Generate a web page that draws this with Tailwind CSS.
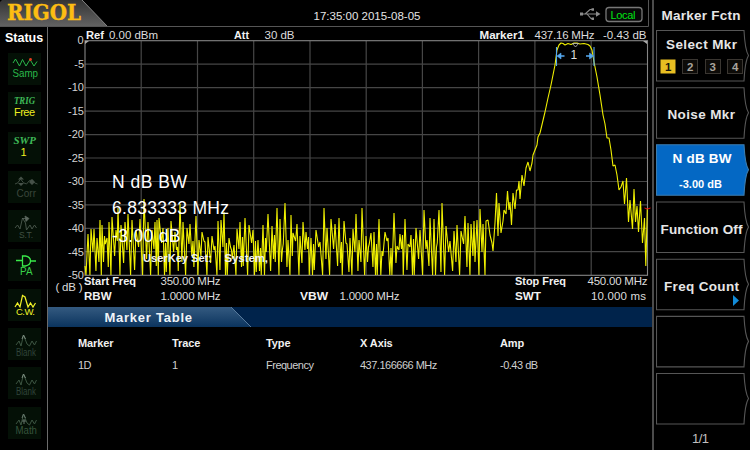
<!DOCTYPE html>
<html lang="en">
<head>
<meta charset="utf-8">
<title>Spectrum Analyzer</title>
<script src="https://cdn.jsdelivr.net/npm/@tailwindcss/browser@4"></script>
</head>
<body class="bg-black overflow-hidden">
<div class="flex w-[750px] h-[450px] bg-black text-[#e4e4e4] font-['Liberation_Sans',Arial,sans-serif]">
  <div class="flex flex-col w-[652px] shrink-0">
    <!-- Top bar -->
    <header class="w-[652px] h-[27px] shrink-0">
      <svg width="652" height="27" viewBox="0 0 652 27" class="block">
        <defs><linearGradient id="logo" x1="0" y1="0" x2="0" y2="1"><stop offset="0" stop-color="#343434"/><stop offset="1" stop-color="#626262"/></linearGradient></defs>
        <path d="M0 2L2 0H82L107 26H0Z" fill="url(#logo)"/>
        <path d="M82 0L107 26" stroke="#858585" fill="none"/>
        <path d="M0 26.500H648.500V0" stroke="#555" fill="none"/>
        <text x="7" y="20" font-family="'DejaVu Serif',serif" font-weight="bold" font-size="21.500" fill="#fdbd12" stroke="#fdbd12" stroke-width=".4" textLength="74" lengthAdjust="spacingAndGlyphs">RIGOL</text>
        <text x="313.500" y="20" font-size="11.500" fill="#e4e4e4" textLength="107">17:35:00 2015-08-05</text>
        <g stroke="#8b8b8b" fill="none" stroke-width="1.100"><path d="M581 14H597M585 14L590 9.500H592M587 14L591 18.500H593"/></g>
        <path d="M596 11.300L600.500 14L596 16.700ZM580 12.500h3v3h-3ZM591.500 8.200h2.500v2.500H591.500ZM591.500 17.500h2.500V20H591.500Z" fill="#8b8b8b"/>
        <rect x="606" y="7.500" width="36" height="14" rx="3" fill="#080808" stroke="#777" stroke-width="1.300"/>
        <text x="610.500" y="19" font-size="11" fill="#00e414" textLength="25">Local</text>
      </svg>
    </header>
    <div class="flex flex-1">
      <!-- Status column -->
      <aside class="w-[48px] shrink-0 border-r border-[#6b6b6b] flex flex-col">
        <h2 class="h-[26px] pt-[3px] pl-[5px] text-[12.5px] leading-[16px] font-bold text-white">Status</h2>
        <div class="flex flex-col gap-[7.300px] pl-[8px]">
          <svg width="33" height="32" viewBox="0 0 33 32" class="bg-[#041006]"><path d="M5 10L7.500 6L11.500 13L14.500 6.500L18 13L22 6.500L26 13L29 8.500" fill="none" stroke="#2ab74a"/><circle cx="22.500" cy="6.500" r="1.400" fill="#e43b20"/><text x="4.500" y="24" font-size="11" fill="#2ab74a" textLength="25.500" lengthAdjust="spacingAndGlyphs">Samp</text></svg>
          <svg width="33" height="32" viewBox="0 0 33 32" class="bg-[#041006]"><text x="6" y="12" font-family="'Liberation Serif',serif" font-size="9.500" font-weight="bold" font-style="italic" fill="#3fb958" textLength="21" lengthAdjust="spacingAndGlyphs">TRIG</text><text x="6" y="24" font-size="11" fill="#eeee20" textLength="21">Free</text></svg>
          <svg width="33" height="32" viewBox="0 0 33 32" class="bg-[#041006]"><text x="5.500" y="12" font-family="'Liberation Serif',serif" font-size="10.500" font-weight="bold" font-style="italic" fill="#3fb958" textLength="22.500" lengthAdjust="spacingAndGlyphs">SWP</text><text x="12.500" y="24" font-size="11" fill="#eeee20">1</text></svg>
          <svg width="33" height="32" viewBox="0 0 33 32" class="bg-[#041006]"><path d="M7 13q3 0 5.500-5q3 5 6 5q3-5 6-4q2 4 5 4" fill="none" stroke="#3f4c41"/><path d="M10 8.500l3-3 3 3ZM10 12l3 3 3-3M21 11l3-3 3 3-3 3Z" fill="#465148"/><text x="8.500" y="26" font-size="11" fill="#3a463c" textLength="19.500" lengthAdjust="spacingAndGlyphs">Corr</text></svg>
          <svg width="33" height="32" viewBox="0 0 33 32" class="bg-[#041006]"><path d="M7 18L9.500 15L12 19L14.500 8L17.500 13L18.500 20L22 15L24 19L26.500 15L28.500 18" fill="none" stroke="#465348"/><path d="M14 8.500h4M17 6l4 2.500-3 3Z" stroke="#5c675e" fill="#5c675e" stroke-width=".8"/><text x="11" y="27.500" font-size="8.500" fill="#415044" textLength="14">S.T.</text></svg>
          <svg width="33" height="32" viewBox="0 0 33 32" class="bg-[#041006]"><path d="M8 11.500h6M22 12h6M14.500 7h3q5 1 5 5t-5 5h-3Z" fill="none" stroke="#39e94a" stroke-width="1.300"/><text x="12" y="26" font-size="10.500" fill="#39d249" textLength="12.500" lengthAdjust="spacingAndGlyphs">PA</text></svg>
          <svg width="33" height="32" viewBox="0 0 33 32" class="bg-[#041006]"><path d="M7 18L9.500 14L12 18L14.500 6.500L17 8L20 18L22.500 14L25 18L27.500 14" fill="none" stroke="#f2f228" stroke-width="1.200"/><text x="8" y="25.500" font-size="9.500" fill="#f2f228" textLength="19">C.W.</text></svg>
          <svg width="33" height="32" viewBox="0 0 33 32" class="bg-[#041006]"><path d="M8 17L11 13L13 18L15.500 7L19 16L21.500 18L24 13L26.500 17L28.500 13" fill="none" stroke="#3d5542"/><path d="M14 11l1.500-4 2 4" stroke="#7c8c7f" fill="none"/><text x="8" y="27.500" font-size="10" fill="#30443a" textLength="20" lengthAdjust="spacingAndGlyphs">Blank</text></svg>
          <svg width="33" height="32" viewBox="0 0 33 32" class="bg-[#041006]"><path d="M8 17L11 13L13 18L15.500 7L19 16L21.500 18L24 13L26.500 17L28.500 13" fill="none" stroke="#3d5542"/><path d="M14 11l1.500-4 2 4" stroke="#7c8c7f" fill="none"/><text x="8" y="27.500" font-size="10" fill="#30443a" textLength="20" lengthAdjust="spacingAndGlyphs">Blank</text></svg>
          <svg width="33" height="32" viewBox="0 0 33 32" class="bg-[#041006]"><path d="M8 17L11 13L13 18L15.500 7L19 16L21.500 18L24 13L26.500 17L28.500 13" fill="none" stroke="#3d5542"/><path d="M14 11l1.500-4 2 4M14 14h4M16 12v5" stroke="#64756a" fill="none"/><text x="7.500" y="26.500" font-size="10" fill="#36533c" textLength="21.500" lengthAdjust="spacingAndGlyphs">Math</text></svg>
        </div>
      </aside>
      <main class="w-[604px] flex flex-col">
        <!-- Spectrum chart -->
        <svg width="604" height="280" viewBox="48 27 604 280" class="block shrink-0">
          <g stroke="#464646" stroke-width="1.200" fill="none">
            <path d="M141.200 41V275M197.500 41V275M253.700 41V275M310 41V275M366.200 41V275M422.400 41V275M478.600 41V275M534.900 41V275M591.200 41V275"/>
            <path d="M85 64.200H648M85 87.600H648M85 111.200H648M85 134.600H648M85 158H648M85 181.500H648M85 204.800H648M85 228.300H648M85 251.600H648"/>
          </g>
          <rect x="85" y="40.700" width="562.500" height="234.600" fill="none" stroke="#858585" stroke-width="1.100"/>
          <path d="M85 41h4l-4 3ZM643 41h4v3Z" fill="#aaa"/>
          <g font-size="11" fill="#d4d4d4" text-anchor="end">
            <text x="83.500" y="44.300">0</text><text x="84" y="67.800">-5</text><text x="84" y="91.300">-10</text><text x="84" y="114.800">-15</text><text x="84" y="138.300">-20</text><text x="84" y="161.800">-25</text><text x="84" y="185.300">-30</text><text x="84" y="208.800">-35</text><text x="84" y="232.300">-40</text><text x="84" y="255.800">-45</text><text x="84" y="279.300">-50</text>
          </g>
          <path id="trace" fill="none" stroke="#f0f000" stroke-width="1.100" stroke-linejoin="bevel"/>
          <g stroke="#56a9f0" fill="#56a9f0">
            <path d="M556.500 47V66M594 47V66" stroke-width="1.100"/>
            <path d="M560 56H564.500M586 56H590" stroke-width="1.500"/>
            <path d="M557 56l4-3v6ZM593.500 56l-4-3v6Z" stroke-width=".6"/>
          </g>
          <path d="M572.500 43.500h6l-3 3.500Z" fill="none" stroke="#bdbdbd" stroke-width=".8"/>
          <text x="570.500" y="58.500" font-size="12" fill="#dedede">1</text>
          <path d="M644.500 208q3 2 6 0" stroke="#e41010" fill="none"/>
          <g font-size="11.500" font-weight="bold" fill="#f2f2f2">
            <text x="86" y="39.300" textLength="18" lengthAdjust="spacingAndGlyphs">Ref</text><text x="234" y="39.300" textLength="15" lengthAdjust="spacingAndGlyphs">Att</text><text x="479.500" y="39.300" textLength="44.500" lengthAdjust="spacingAndGlyphs">Marker1</text>
            <text x="84" y="285" textLength="52" lengthAdjust="spacingAndGlyphs">Start Freq</text><text x="515" y="285" textLength="51" lengthAdjust="spacingAndGlyphs">Stop Freq</text>
            <text x="84" y="300" textLength="27.500" lengthAdjust="spacingAndGlyphs">RBW</text><text x="300" y="300" textLength="28" lengthAdjust="spacingAndGlyphs">VBW</text><text x="515" y="300" textLength="26" lengthAdjust="spacingAndGlyphs">SWT</text>
            <text x="143" y="262.300" textLength="69" lengthAdjust="spacingAndGlyphs">UserKey Set:</text><text x="224.500" y="262.300" textLength="43.500" lengthAdjust="spacingAndGlyphs">System,</text>
          </g>
          <g font-size="11.500" fill="#dcdcdc">
            <text x="109" y="39.300" textLength="49">0.00 dBm</text><text x="264.500" y="39.300" textLength="30">30 dB</text><text x="534.500" y="39.300" textLength="60">437.16 MHz</text><text x="603" y="39.300" textLength="43.500">-0.43 dB</text>
            <text x="160.500" y="285" textLength="60">350.00 MHz</text><text x="587.500" y="285" textLength="60">450.00 MHz</text>
            <text x="160.500" y="300" textLength="60">1.0000 MHz</text><text x="339.500" y="300" textLength="60">1.0000 MHz</text><text x="591" y="300" textLength="55">10.000 ms</text>
            <text x="55.500" y="291" textLength="27">( dB )</text>
          </g>
          <g font-size="17.500" fill="#fff">
            <text x="112" y="188" textLength="75">N dB BW</text><text x="112" y="213.700" textLength="117">6.833333 MHz</text><text x="112" y="242" textLength="68.500">-3.00 dB</text>
          </g>
        </svg>
        <!-- Marker table -->
        <section class="w-[604px]">
          <div class="h-[20px] bg-[#00234b]">
            <svg width="204" height="20" viewBox="0 0 204 20" class="block">
              <defs><linearGradient id="tab" x1="0" y1="0" x2="0" y2="1"><stop offset="0" stop-color="#345a80"/><stop offset="1" stop-color="#0b345e"/></linearGradient></defs>
              <path d="M0 0H183L203 20H0Z" fill="url(#tab)"/><path d="M183 0L203 20" stroke="#57799b"/>
              <text x="56.500" y="14.500" font-size="13" font-weight="bold" fill="#f0f4f8" textLength="87.500">Marker Table</text>
            </svg>
          </div>
          <div class="grid grid-cols-[94px_94px_94px_140px_1fr] pl-[30px] pt-[9px] text-[11px] leading-[14px] font-bold text-[#f0f0f0] tracking-[-0.1px]">
            <span>Marker</span><span>Trace</span><span>Type</span><span>X Axis</span><span>Amp</span>
          </div>
          <div class="grid grid-cols-[94px_94px_94px_140px_1fr] pl-[30px] pt-[8px] text-[11px] leading-[14px] text-[#cfcfcf] tracking-[-0.5px]">
            <span>1D</span><span>1</span><span>Frequency</span><span>437.166666 MHz</span><span>-0.43 dB</span>
          </div>
        </section>
      </main>
    </div>
  </div>
  <!-- Soft-key menu -->
  <nav class="w-[98px] shrink-0 border-l-2 border-[#4b4b4b] pl-[2px]">
    <svg width="94" height="450" viewBox="656 0 94 450" class="block">
      <defs><path id="key" d="M656.500 .5H744Q745 20 748.500 25.500Q745 31 744 51H656.500Z"/></defs>
      <g fill="#000" stroke="#565656" stroke-width="1.100">
        <use href="#key" y="30"/><use href="#key" y="87.200"/><use href="#key" y="144.300" fill="#0468c4" stroke="#3c7cae"/><use href="#key" y="201.500"/><use href="#key" y="258.700"/><use href="#key" y="315.900"/><use href="#key" y="373"/>
      </g>
      <g font-size="13.500" font-weight="bold" fill="#e6e6e6">
        <text x="661.500" y="20.300" textLength="79">Marker Fctn</text><text x="666" y="48.500" textLength="71">Select Mkr</text>
        <text x="667.500" y="119" textLength="67.500">Noise Mkr</text><text x="672.500" y="163" fill="#fff" textLength="59">N dB BW</text>
        <text x="660.500" y="233.500" textLength="82">Function Off</text><text x="664" y="290.500" textLength="75">Freq Count</text>
        <text x="679" y="188.300" font-size="11" fill="#fff" textLength="43">-3.00 dB</text>
      </g>
      <rect x="660.500" y="59.500" width="15" height="14" fill="#e8be22"/>
      <g fill="#0d0b08" stroke="#3a3631"><rect x="682.500" y="59.500" width="15" height="14"/><rect x="705.500" y="59.500" width="15" height="14"/><rect x="727.500" y="59.500" width="15" height="14"/></g>
      <g font-size="11.500" font-weight="bold" fill="#a9a59c"><text x="665" y="70.500" fill="#17150b">1</text><text x="687" y="70.500">2</text><text x="709.500" y="70.500">3</text><text x="732" y="70.500">4</text></g>
      <path d="M733 295v11l6-5.500Z" fill="#128bd8"/>
      <text x="692" y="443" font-size="13" fill="#c0c0c0" textLength="17">1/1</text>
    </svg>
  </nav>
</div>
<script>
// Noise-floor peaks followed by the filter response, in chart units.
const peaks = [[88,234],[91,229],[94,229],[97,238],[100,220],[102,225],[107,238],[109,222],[112,217],[116,230],[118,208],[121,225],[125,222],[128,214],[132,220],[136,230],[140,219],[144,199],[148,222],[152,230],[155,222],[157,220],[159,218],[163,228],[168,228],[171,221],[175,232],[180,204],[183,222],[187,228],[190,224],[196,216],[199,240],[202,232],[205,242],[208,237],[212,236],[215,246],[218,221],[221,220],[224,212],[229,238],[234,245],[237,229],[240,222],[245,218],[249,225],[253,230],[258,240],[263,225],[268,214],[272,226],[277,208],[280,219],[285,203],[288,240],[291,215],[293,233],[297,224],[300,236],[303,222],[306,232],[311,238],[316,230],[320,242],[324,208],[327,228],[331,219],[335,224],[339,218],[344,221],[347,244],[350,238],[353,229],[356,214],[359,240],[362,208],[366,236],[371,233],[374,232],[379,219],[385,232],[388,238],[394,213],[397,246],[400,234],[405,219],[408,244],[411,235],[416,228],[420,230],[424,210],[427,240],[430,218],[434,219],[439,210],[442,203],[446,226],[450,241],[454,231],[457,225],[461,231],[465,216],[468,223],[471,224]];
const lows = [275,252,271,262,275,244,267,275,256,241,275,263,250,275,270,247,275,259,275,249,266,275,243,272];
const response = [[474,221],[475,262],[477,220],[479,275],[480,209],[482,252],[483,224],[485,275],[486,221],[488,220],[490,235],[492,243],[493,251],[495,223],[496.5,193],[498,236],[499,203],[501,233],[503,221],[504,210],[506,214],[507.5,191],[509,210],[510,202],[511.5,225],[513,193],[515,209],[516.5,190],[518,190],[519,181],[520,199],[522,175],[524,186],[526,168],[528,162],[530,171],[532,163],[533,155],[535,150],[537,145],[538,137],[540,133],[545,112],[548,98],[551,85],[555,65],[557,50],[559,45],[561,43],[563,43.5],[565,45],[568,43.5],[571,44.5],[574,43],[577,43],[580,44],[584,43.5],[588,44.5],[590,46],[592,50],[594,62],[597,77],[600,95],[603,115],[605,124],[607,138],[609,138],[611,150],[613,166],[615,165],[617,175],[619,190],[621,187],[623,181],[624.5,204],[626.5,178],[628.5,222],[630,200],[632.5,229],[634,189],[635.5,222],[637,206],[638.5,232],[640.5,201],[642.5,243],[644.5,218],[645.8,266],[647.3,209]];
const pts = [[85,266],[86,275]];
peaks.forEach(([x, y], i) => {
  const next = i + 1 < peaks.length ? peaks[i + 1][0] : 474, gap = next - x;
  pts.push([x, y]);
  if (gap > 4) pts.push([x + gap * .3, lows[(i * 5 + 2) % 24]], [x + gap * .5, 235 + (i * 7) % 17]);
  pts.push([x + gap * .65, lows[i % 24]]);
});
document.getElementById('trace').setAttribute('d', 'M' + pts.concat(response).map(p => p.join(' ')).join('L'));
</script>
</body>
</html>
